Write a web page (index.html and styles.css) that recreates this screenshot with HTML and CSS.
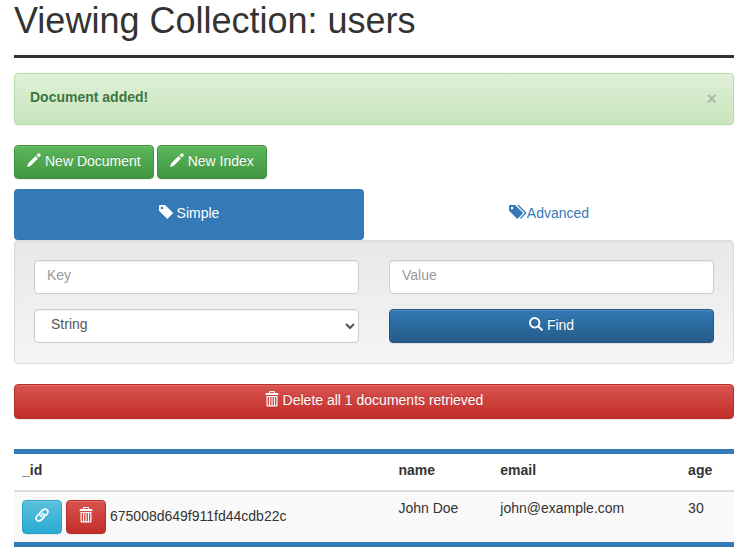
FILE: index.html
```html
<!DOCTYPE html>
<html lang="en">
<head>
<meta charset="utf-8">
<title>users</title>
<link rel="stylesheet" href="styles.css">
</head>
<body>
<svg class="defs" aria-hidden="true">
  <symbol id="pencil" viewBox="0 0 14 14"><path d="M0 14 1.3 10.2 8.6 3.1 10.9 5.4 3.8 12.7zM9.5 2.2 11.3.5Q11.9-.1 12.5.4L13.6 1.5Q14.1 2.1 13.5 2.7L11.8 4.5z"/></symbol>
  <symbol id="tag" viewBox="0 0 14 14"><path fill-rule="evenodd" d="M1 0H5.6L6.6.4 13.7 7.5Q14.2 8 13.7 8.5L8.9 13.5Q8.4 14 7.9 13.5L.5 6.3 0 5.3V1Q0 0 1 0zM3 1.7A1.3 1.3 0 1 0 3 4.3 1.3 1.3 0 0 0 3 1.7z"/></symbol>
  <symbol id="tags" viewBox="0 0 18 14"><path fill-rule="evenodd" d="M1 0H5.6L6.6.4 13.7 7.5Q14.2 8 13.7 8.5L8.9 13.5Q8.4 14 7.9 13.5L.5 6.3 0 5.3V1Q0 0 1 0zM3 1.7A1.3 1.3 0 1 0 3 4.3 1.3 1.3 0 0 0 3 1.7z"/><path d="M8 0H9.3L10.3.4 17.2 7.5Q17.7 8 17.2 8.5L12.4 13.5Q11.8 14 11.2 13.5L10.9 13.2 15.8 8z"/></symbol>
  <symbol id="search" viewBox="0 0 14 14"><circle cx="5.7" cy="5.7" r="4.7" fill="none" stroke="currentColor" stroke-width="2"/><path d="M8.4 9.8 9.8 8.4 13.8 12.3Q14.2 12.9 13.6 13.6 12.9 14.2 12.3 13.8z"/></symbol>
  <symbol id="trash" viewBox="0 0 14 16"><path fill-rule="evenodd" d="M4 2V1Q4 0 5 0H9Q10 0 10 1V2H12.5L13.5 3V4H.5V3L1.5 2zM5 2H9V1H5z"/><path fill-rule="evenodd" d="M1.5 5H12.5V14.5Q12.5 15.5 11.5 15.5H2.5Q1.5 15.5 1.5 14.5zM2.7 6V14.2H4V6zM5.2 6V14.2H6.5V6zM7.6 6V14.2H8.9V6zM10 6V14.2H11.3V6z"/></symbol>
  <symbol id="link" viewBox="0 0 14 14"><g fill="none" stroke="currentColor" stroke-width="1.7" stroke-linecap="round"><path d="M11 7.1 12 6Q13.9 3.6 12 1.8 10.1.2 8 2L5.3 4.4Q3.6 6.2 5.3 7.5L6.8 8.5"/><path d="M3 6.9 2 8Q.1 10.4 2 12.2 3.9 13.8 6 12L8.7 9.6Q10.4 7.8 8.7 6.5L7.2 5.5"/></g></symbol>
</svg>
<main class="container">
  <h1>Viewing Collection: users</h1>

  <div class="alert" role="status">
    <strong>Document added!</strong>
    <button class="close" type="button" aria-label="Close">×</button>
  </div>

  <div class="actions">
    <button class="btn success" type="button"><svg class="icon"><use href="#pencil"/></svg>New Document</button>
    <button class="btn success" type="button"><svg class="icon"><use href="#pencil"/></svg>New Index</button>
  </div>

  <nav class="tabs">
    <a class="tab active" href="#simple"><svg class="icon"><use href="#tag"/></svg>Simple</a>
    <a class="tab" href="#advanced"><svg class="icon wide"><use href="#tags"/></svg>Advanced</a>
  </nav>

  <form class="well" id="simple">
    <input class="field" type="text" placeholder="Key" aria-label="Key">
    <input class="field" type="text" placeholder="Value" aria-label="Value">
    <select class="field" aria-label="Type"><option>String</option></select>
    <button class="btn primary" type="button"><svg class="icon"><use href="#search"/></svg>Find</button>
  </form>

  <button class="btn danger block" type="button"><svg class="icon tall"><use href="#trash"/></svg>Delete all 1 documents retrieved</button>

  <table>
    <thead>
      <tr><th>_id</th><th>name</th><th>email</th><th>age</th></tr>
    </thead>
    <tbody>
      <tr>
        <td><div class="id-cell">
          <a class="btn info" href="#link" aria-label="Link"><svg class="icon"><use href="#link"/></svg></a>
          <button class="btn danger" type="button" aria-label="Delete"><svg class="icon tall"><use href="#trash"/></svg></button>
          <span class="id">675008d649f911fd44cdb22c</span>
        </div></td>
        <td>John Doe</td>
        <td>john@example.com</td>
        <td>30</td>
      </tr>
    </tbody>
  </table>
</main>
</body>
</html>
```
FILE: styles.css
```css
* { box-sizing: border-box; }

body {
  margin: 0;
  background: #fff;
  color: #333;
  font: 14px/20px "Liberation Sans", Arial, sans-serif;
}

.defs { display: none; }

.container { padding: 1px 16px 10px 14px; }

h1 {
  margin: 0 0 15px;
  padding-bottom: 14px;
  border-bottom: 3px solid #333;
  font-size: 36px;
  line-height: 40px;
  font-weight: 400;
}

.icon {
  flex: none;
  width: 14px;
  height: 14px;
  margin-bottom: 2px;
  fill: currentColor;
}
.icon.wide { width: 18px; }
.icon.tall { height: 16px; }

.alert {
  display: flex;
  justify-content: space-between;
  margin-bottom: 20px;
  padding: 13px 15px 17px;
  border: 1px solid #b2dba1;
  border-radius: 4px;
  background: linear-gradient(#dff0d8, #c8e5bc);
  box-shadow: inset 0 1px 0 rgba(255, 255, 255, .25), 0 1px 2px rgba(0, 0, 0, .05);
  color: #3c763d;
  text-shadow: 0 1px 0 rgba(255, 255, 255, .2);
}

.close {
  padding: 4px 1px 0;
  border: 0;
  background: none;
  color: #000;
  font: 700 18px/16px "Liberation Sans", Arial, sans-serif;
  text-shadow: 0 1px 0 #fff;
  opacity: .2;
}

.btn {
  display: inline-flex;
  align-items: center;
  justify-content: center;
  gap: 4px;
  height: 34px;
  padding: 0 12px 2px;
  border: 1px solid;
  border-radius: 4px;
  color: #fff;
  font: inherit;
  text-decoration: none;
  text-shadow: 0 -1px 0 rgba(0, 0, 0, .2);
  box-shadow: inset 0 1px 0 rgba(255, 255, 255, .15), 0 1px 1px rgba(0, 0, 0, .075);
}
.success { border-color: #3e8f3e; background: linear-gradient(#5cb85c, #419641); }
.primary { border-color: #245580; background: linear-gradient(#337ab7, #265a88); }
.info { border-color: #28a4c9; background: linear-gradient(#5bc0de, #2aabd2); }
.danger { border-color: #b92c28; background: linear-gradient(#d9534f, #c12e2a); }
.block { width: 100%; height: 35px; padding-bottom: 3px; }

.actions {
  display: flex;
  gap: 3px;
  margin-bottom: 10px;
}

.tabs {
  display: grid;
  grid-template-columns: 35fr 37fr;
}
.tab {
  display: flex;
  align-items: center;
  justify-content: center;
  gap: 4px;
  padding: 14px 15px 17px;
  border-radius: 4px;
  color: #337ab7;
  text-decoration: none;
}
.tab.active { background: #337ab7; color: #fff; }
.tab .wide { margin-right: -4px; }

.well {
  display: grid;
  grid-template-columns: 1fr 1fr;
  gap: 15px 30px;
  margin-bottom: 20px;
  padding: 19px 19px 20px;
  border: 1px solid #dcdcdc;
  border-radius: 4px;
  background: linear-gradient(#e8e8e8, #f5f5f5);
  box-shadow: inset 0 1px 3px rgba(0, 0, 0, .05), 0 1px 0 rgba(255, 255, 255, .1);
}

.field {
  width: 100%;
  height: 34px;
  padding: 4px 12px 8px;
  border: 1px solid #ccc;
  border-radius: 4px;
  background-color: #fff;
  color: #555;
  font: inherit;
  box-shadow: inset 0 1px 1px rgba(0, 0, 0, .075);
}
.field::placeholder { color: #999; }

table {
  width: 100%;
  margin-top: 30px;
  border-top: 5px solid #337ab7;
  border-bottom: 5px solid #337ab7;
  border-spacing: 0;
}
th, td { padding: 6px 8px 10px; text-align: left; vertical-align: top; }
th { border-bottom: 2px solid #ddd; }
tbody { background: #f9f9f9; }
td:first-child { padding: 8px; }

.id-cell { display: flex; align-items: center; gap: 4px; }
.id { padding-bottom: 2px; }
```
